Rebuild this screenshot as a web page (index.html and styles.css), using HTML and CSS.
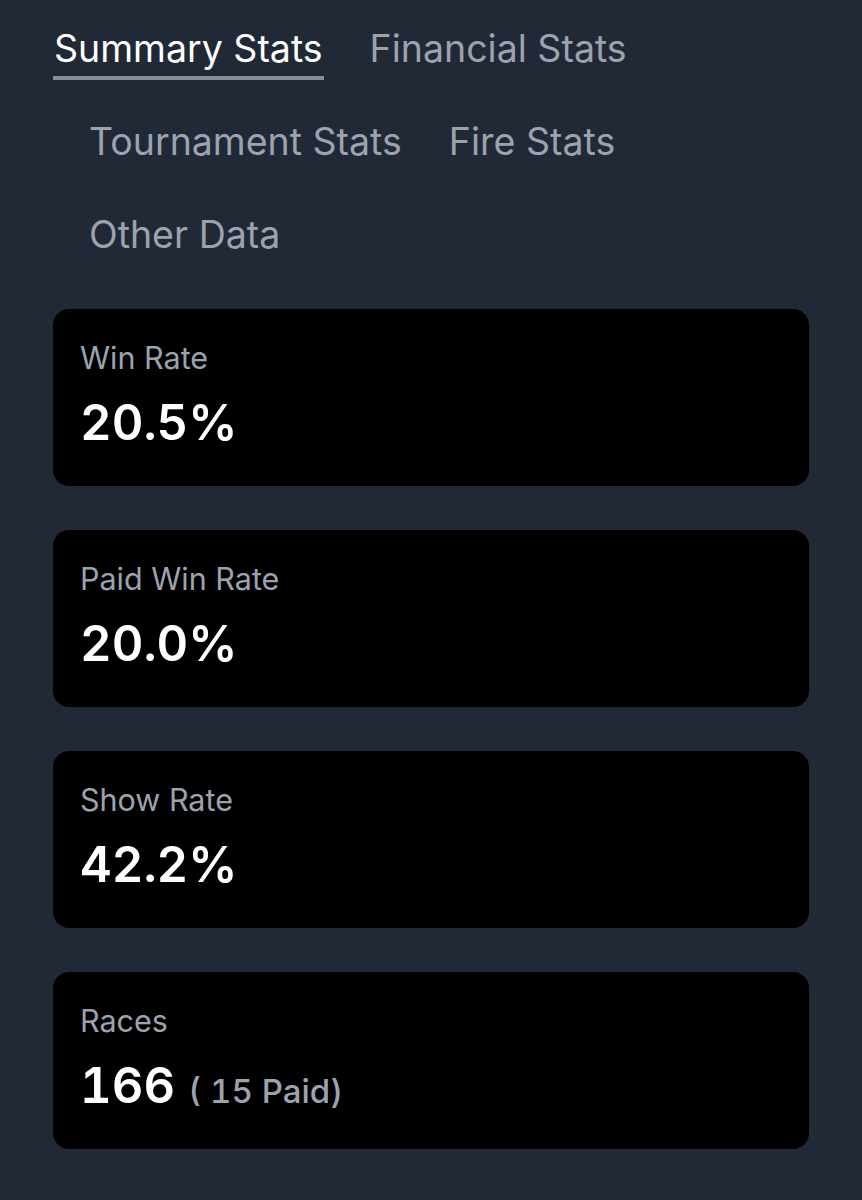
FILE: index.html
```html
<!DOCTYPE html>
<html lang="en">
<head>
    <meta charset="UTF-8">
    <meta name="viewport" content="width=device-width, initial-scale=1.0">
    <title>Summary Stats</title>
    <link rel="stylesheet" href="styles.css">
</head>
<body>
    <div class="container">
        <!-- Tabs -->
        <div class="tabs">
            <span class="tab active">Summary Stats</span>
            <span class="tab">Financial Stats</span>
            <span class="tab">Tournament Stats</span>
            <span class="tab">Fire Stats</span>
            <span class="tab">Other Data</span>
        </div>

        <!-- Stat cards -->
        <div class="stats">
            <div class="stat-card">
                <div class="stat-label">Win Rate</div>
                <div class="stat-value">20.5%</div>
            </div>
            <div class="stat-card">
                <div class="stat-label">Paid Win Rate</div>
                <div class="stat-value">20.0%</div>
            </div>
            <div class="stat-card">
                <div class="stat-label">Show Rate</div>
                <div class="stat-value">42.2%</div>
            </div>
            <div class="stat-card">
                <div class="stat-label">Races</div>
                <div class="stat-value">166 <span class="stat-sub">( 15 Paid)</span></div>
            </div>
        </div>
    </div>
</body>
</html>
```

FILE: styles.css
```css
body {
    background-color: #212836;
    margin: 0;
    font-family: Inter, "Noto Sans", sans-serif;
}

.container {
    padding: 21px 53px 40px;
}

.tabs {
    display: flex;
    flex-wrap: wrap;
    align-items: flex-start;
    column-gap: 10px;
}

.tab {
    font-size: 37.5px;
    line-height: 55px;
    color: #9ca3af;
    margin-left: 35px;
    margin-bottom: 38px;
    padding: 0 1px;
}

.tab:first-child {
    margin-left: 0;
}

.tab.active {
    color: #ffffff;
    border-bottom: 4px solid #878d98;
    margin-bottom: 34px;
}

.stats {
    display: flex;
    flex-direction: column;
    gap: 44px;
    margin-top: 9px;
}

.stat-card {
    background: #000000;
    border-radius: 16px;
    height: 177px;
    box-sizing: border-box;
    padding: 31px 27px;
}

.stat-label {
    font-size: 30.5px;
    color: #9ca3af;
    line-height: 36px;
}

.stat-value {
    font-size: 49px;
    font-weight: 600;
    color: #ffffff;
    line-height: 60px;
    margin-top: 17px;
    font-variant-numeric: tabular-nums;
}

.stat-sub {
    font-size: 33px;
    font-weight: 500;
    color: #9ca3af;
}
```
